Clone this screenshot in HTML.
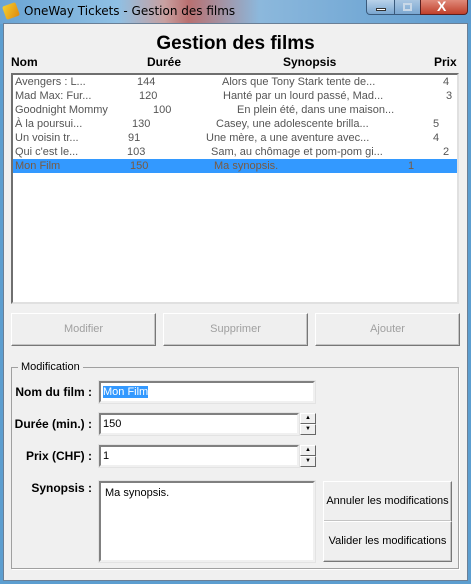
<!DOCTYPE html>
<html><head><meta charset="utf-8"><style>
*{margin:0;padding:0;box-sizing:border-box}
body{width:471px;height:584px;overflow:hidden;background:#5c9ed0;font-family:"Liberation Sans",sans-serif;position:relative}
.a{position:absolute;white-space:nowrap}
#tb{left:0;top:0;width:471px;height:24px;background:linear-gradient(90deg,#6aa4d4 0%,#8fc0e4 25%,#c8a0a0 35%,#b97070 40%,#8cb8dc 55%,#5d9bcf 100%)}
#content{left:3px;top:23px;width:465px;height:558px;background:#f0f0f0;border:1px solid #6a7f96}
.r{font-size:11px;color:#555;height:14px;line-height:14px}
.h{font-size:12px;font-weight:bold;color:#000}
.btn{background:#efefef;border:1px solid #fff;border-right-color:#777;border-bottom-color:#777;box-shadow:inset -1px -1px 0 #c4c4c4;font-size:11px;color:#a0a0a0;text-align:center}
.fld{background:#fff;border:2px solid #f0f0f0;border-top-color:#808080;border-left-color:#808080;outline:1px solid #e3e3e3;font-size:11px;color:#000;padding-left:2px}
.lb{font-size:12px;font-weight:bold;color:#000;text-align:right;width:90px;left:2px}
.sp{background:#efefef;border:1px solid #fff;border-right-color:#666;border-bottom-color:#666;font-size:6px;text-align:center;line-height:9px;color:#000}
</style></head><body>
<div class="a" id="tb"></div>
<div class="a" style="left:4px;top:4px;width:14px;height:14px;background:linear-gradient(135deg,#f2d030,#e08a10);transform:rotate(-20deg);border-radius:2px"></div>
<div class="a" style="left:24px;top:4px;font-size:12px;color:#000;font-family:'DejaVu Sans',sans-serif">OneWay Tickets - Gestion des films</div>
<div class="a" style="left:366px;top:0;width:29px;height:15px;border:1px solid #3a5a7c;border-top:none;border-radius:0 0 0 4px;background:linear-gradient(#b9d2ea,#7aa6d0)"></div>
<div class="a" style="left:376px;top:8px;width:10px;height:3px;background:#fff;border:1px solid #333"></div>
<div class="a" style="left:394px;top:0;width:27px;height:15px;border:1px solid #3a5a7c;border-top:none;background:linear-gradient(#a9c6e2,#7aa6d0)"></div>
<div class="a" style="left:403px;top:3px;width:9px;height:8px;border:2px solid #c8d8e8"></div>
<div class="a" style="left:420px;top:0;width:48px;height:15px;border:1px solid #5a2020;border-top:none;border-radius:0 0 4px 0;background:linear-gradient(#e08a7a,#c0402c)"></div>
<div class="a" style="left:437px;top:-2px;font-size:14px;font-weight:bold;color:#fff">X</div>
<div class="a" id="content"></div>
<div class="a" style="left:0;width:471px;top:33px;text-align:center;font-size:19px;font-weight:bold">Gestion des films</div>
<div class="a h" style="left:11px;top:55px">Nom</div>
<div class="a h" style="left:147px;top:55px">Durée</div>
<div class="a h" style="left:283px;top:55px">Synopsis</div>
<div class="a h" style="left:434px;top:55px">Prix</div>
<div class="a" style="left:11px;top:73px;width:448px;height:231px;background:#fff;border:2px solid #6f6f6f;border-right-color:#e0e0e0;border-bottom-color:#e0e0e0;overflow:hidden">
<div class="a" style="left:0;top:84px;width:446px;height:14px;background:#3399ff"></div>
</div>
<div class="a r" style="left:15px;top:75px">Avengers : L...</div><div class="a r" style="left:137px;top:75px">144</div><div class="a r" style="left:222px;top:75px">Alors que Tony Stark tente de...</div><div class="a r" style="left:443px;top:75px">4</div>
<div class="a r" style="left:15px;top:89px">Mad Max: Fur...</div><div class="a r" style="left:139px;top:89px">120</div><div class="a r" style="left:223px;top:89px">Hanté par un lourd passé, Mad...</div><div class="a r" style="left:446px;top:89px">3</div>
<div class="a r" style="left:15px;top:103px">Goodnight Mommy</div><div class="a r" style="left:153px;top:103px">100</div><div class="a r" style="left:237px;top:103px">En plein été, dans une maison...</div>
<div class="a r" style="left:15px;top:117px">À la poursui...</div><div class="a r" style="left:132px;top:117px">130</div><div class="a r" style="left:216px;top:117px">Casey, une adolescente brilla...</div><div class="a r" style="left:433px;top:117px">5</div>
<div class="a r" style="left:15px;top:131px">Un voisin tr...</div><div class="a r" style="left:128px;top:131px">91</div><div class="a r" style="left:206px;top:131px">Une mère, a une aventure avec...</div><div class="a r" style="left:433px;top:131px">4</div>
<div class="a r" style="left:15px;top:145px">Qui c'est le...</div><div class="a r" style="left:127px;top:145px">103</div><div class="a r" style="left:211px;top:145px">Sam, au chômage et pom-pom gi...</div><div class="a r" style="left:443px;top:145px">2</div>
<div class="a r" style="left:15px;top:159px;color:#7a5a40">Mon Film</div><div class="a r" style="left:130px;top:159px;color:#7a5a40">150</div><div class="a r" style="left:214px;top:159px;color:#7a5a40">Ma synopsis.</div><div class="a r" style="left:408px;top:159px;color:#7a5a40">1</div>
<div class="a btn" style="left:11px;top:313px;width:145px;height:33px;line-height:31px">Modifier</div>
<div class="a btn" style="left:163px;top:313px;width:145px;height:33px;line-height:31px">Supprimer</div>
<div class="a btn" style="left:315px;top:313px;width:145px;height:33px;line-height:31px">Ajouter</div>
<div class="a" style="left:11px;top:367px;width:448px;height:202px;border:1px solid #a0a0a0;box-shadow:1px 1px 0 #fff"></div>
<div class="a" style="left:18px;top:361px;padding:0 3px;background:#f0f0f0;font-size:11px;color:#000">Modification</div>
<div class="a lb" style="top:385px">Nom du film :</div>
<div class="a fld" style="left:99px;top:381px;width:216px;height:22px;line-height:18px"><span style="background:#3399ff;color:#fff">Mon Film</span></div>
<div class="a lb" style="top:417px">Durée (min.) :</div>
<div class="a fld" style="left:99px;top:413px;width:200px;height:22px;line-height:18px">150</div>
<div class="a sp" style="left:300px;top:413px;width:16px;height:11px">▲</div>
<div class="a sp" style="left:300px;top:424px;width:16px;height:11px">▼</div>
<div class="a lb" style="top:449px">Prix (CHF) :</div>
<div class="a fld" style="left:99px;top:445px;width:200px;height:22px;line-height:18px">1</div>
<div class="a sp" style="left:300px;top:445px;width:16px;height:11px">▲</div>
<div class="a sp" style="left:300px;top:456px;width:16px;height:11px">▼</div>
<div class="a lb" style="top:481px">Synopsis :</div>
<div class="a fld" style="left:99px;top:481px;width:216px;height:81px;padding:4px 0 0 4px">Ma synopsis.</div>
<div class="a btn" style="left:323px;top:481px;width:129px;height:41px;line-height:39px;color:#000">Annuler les modifications</div>
<div class="a btn" style="left:323px;top:521px;width:129px;height:41px;line-height:39px;color:#000">Valider les modifications</div>
</body></html>
